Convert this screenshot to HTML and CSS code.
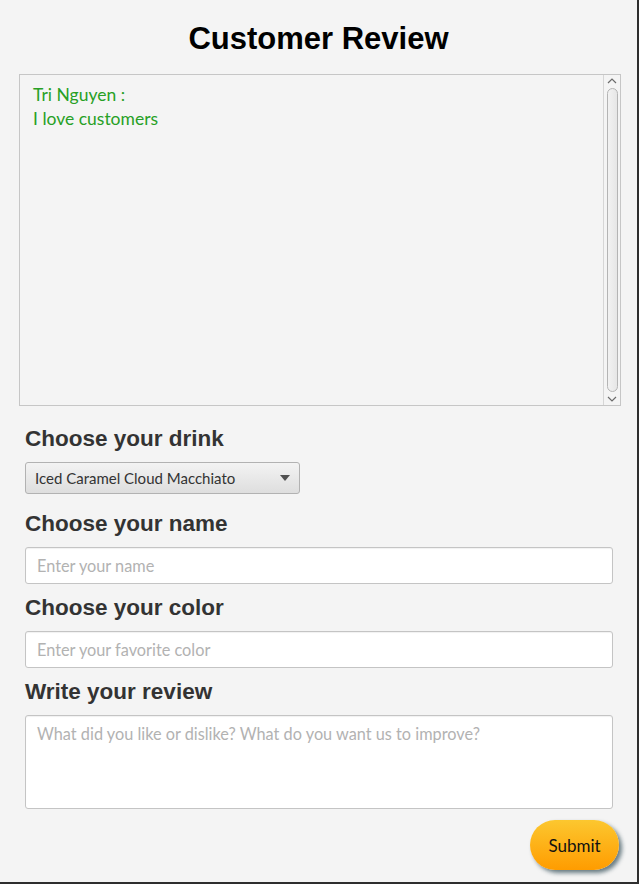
FILE: index.html
```html
<!DOCTYPE html>
<html>
<head>
<meta charset="utf-8">
<link rel="stylesheet" href="styles.css">
</head>
<body>
<div class="window">
  <h1 class="title">Customer Review</h1>
  <div class="review-panel">
    <div class="review-content">
      <div class="review-line">Tri Nguyen :</div>
      <div class="review-line">I love customers</div>
    </div>
    <div class="scrollbar">
      <svg class="arrow" width="10" height="6" viewBox="0 0 10 6"><path d="M1 5 L5 1 L9 5" fill="none" stroke="#6b6b6b" stroke-width="1.2"/></svg>
      <div class="thumb"></div>
      <svg class="arrow" width="10" height="6" viewBox="0 0 10 6"><path d="M1 1 L5 5 L9 1" fill="none" stroke="#6b6b6b" stroke-width="1.2"/></svg>
    </div>
  </div>
  <div class="form">
    <div class="label first">Choose your drink</div>
    <div class="combo">
      <span class="combo-text">Iced Caramel Cloud Macchiato</span>
      <svg class="combo-arrow" width="10" height="6" viewBox="0 0 10 6"><path d="M0 0 H10 L5 6 Z" fill="#505050"/></svg>
    </div>
    <div class="label">Choose your name</div>
    <div class="input"><span class="placeholder">Enter your name</span></div>
    <div class="label">Choose your color</div>
    <div class="input"><span class="placeholder">Enter your favorite color</span></div>
    <div class="label">Write your review</div>
    <div class="textarea"><span class="placeholder">What did you like or dislike? What do you want us to improve?</span></div>
    <div class="actions">
      <button class="submit">Submit</button>
    </div>
  </div>
</div>
</body>
</html>
```
FILE: styles.css
```css
html, body {
  margin: 0;
  padding: 0;
  background: #f4f4f4;
}
.window {
  width: 639px;
  height: 884px;
  box-sizing: border-box;
  border-right: 2px solid #2e2e2e;
  border-bottom: 2px solid #2e2e2e;
  background: #f4f4f4;
  overflow: hidden;
}
.title {
  margin: 21px 0 0 0;
  font-family: "Liberation Sans", Arial, sans-serif;
  font-weight: bold;
  font-size: 31px;
  line-height: 36px;
  text-align: center;
  color: #000;
}
.review-panel {
  margin: 17px 0 0 19px;
  width: 602px;
  height: 332px;
  box-sizing: border-box;
  border: 1px solid #c6c6c6;
  background: #f4f4f4;
  display: flex;
}
.review-content {
  flex: 1;
  padding: 8px 0 0 13px;
  font-family: Lato, "Open Sans", sans-serif;
  font-size: 17.5px;
  line-height: 24px;
  color: #27a025;
}
.scrollbar {
  width: 17px;
  border-left: 1px solid #d6d6d6;
  display: flex;
  flex-direction: column;
  align-items: center;
  padding: 3px 0 3px 0;
  box-sizing: border-box;
}
.arrow {
  display: block;
  flex: none;
}
.thumb {
  flex: 1;
  width: 11px;
  margin: 4px 0 4px 0;
  box-sizing: border-box;
  border: 1px solid #b4b4b4;
  border-radius: 6px;
  background: linear-gradient(to right, #f2f2f2, #e6e6e6);
}
.form {
  padding: 0 24px 0 25px;
  display: flex;
  flex-direction: column;
}
.label {
  font-family: "Liberation Sans", Arial, sans-serif;
  font-weight: bold;
  font-size: 22.5px;
  line-height: 26px;
  color: #333;
  margin: 11px 0 10px 0;
}
.label.first {
  margin-top: 20px;
}
.combo {
  width: 275px;
  height: 32px;
  box-sizing: border-box;
  border: 1px solid #b2b2b2;
  border-radius: 3px;
  background: linear-gradient(to bottom, #f3f3f3, #dedede);
  display: flex;
  align-items: center;
  justify-content: space-between;
  padding: 0 9px 0 9px;
  margin-bottom: 6px;
}
.combo-text {
  font-family: Lato, "Open Sans", sans-serif;
  font-size: 15px;
  color: #333;
}
.combo-arrow {
  display: block;
}
.input {
  height: 37px;
  box-sizing: border-box;
  border: 1px solid #c4c4c4;
  border-radius: 3px;
  background: #fff;
  box-shadow: inset 0 1px 1px rgba(0,0,0,0.06);
  display: flex;
  align-items: center;
  padding: 0 11px;
}
.placeholder {
  font-family: Lato, "Open Sans", sans-serif;
  font-size: 16.3px;
  color: #b2b2b2;
}
.textarea {
  height: 94px;
  box-sizing: border-box;
  border: 1px solid #c4c4c4;
  border-radius: 3px;
  background: #fff;
  box-shadow: inset 0 1px 1px rgba(0,0,0,0.06);
  padding: 8px 11px;
  line-height: 20px;
}
.actions {
  display: flex;
  justify-content: flex-end;
  margin-top: 11px;
}
.submit {
  width: 89px;
  height: 50px;
  margin-right: -6px;
  border: none;
  border-radius: 25px;
  background: linear-gradient(to bottom, #fcc72f, #ff9c00);
  box-shadow: 3px 3px 4px rgba(30, 60, 70, 0.65);
  font-family: Lato, "Open Sans", sans-serif;
  font-size: 17px;
  color: #111;
  padding: 0;
}
```
